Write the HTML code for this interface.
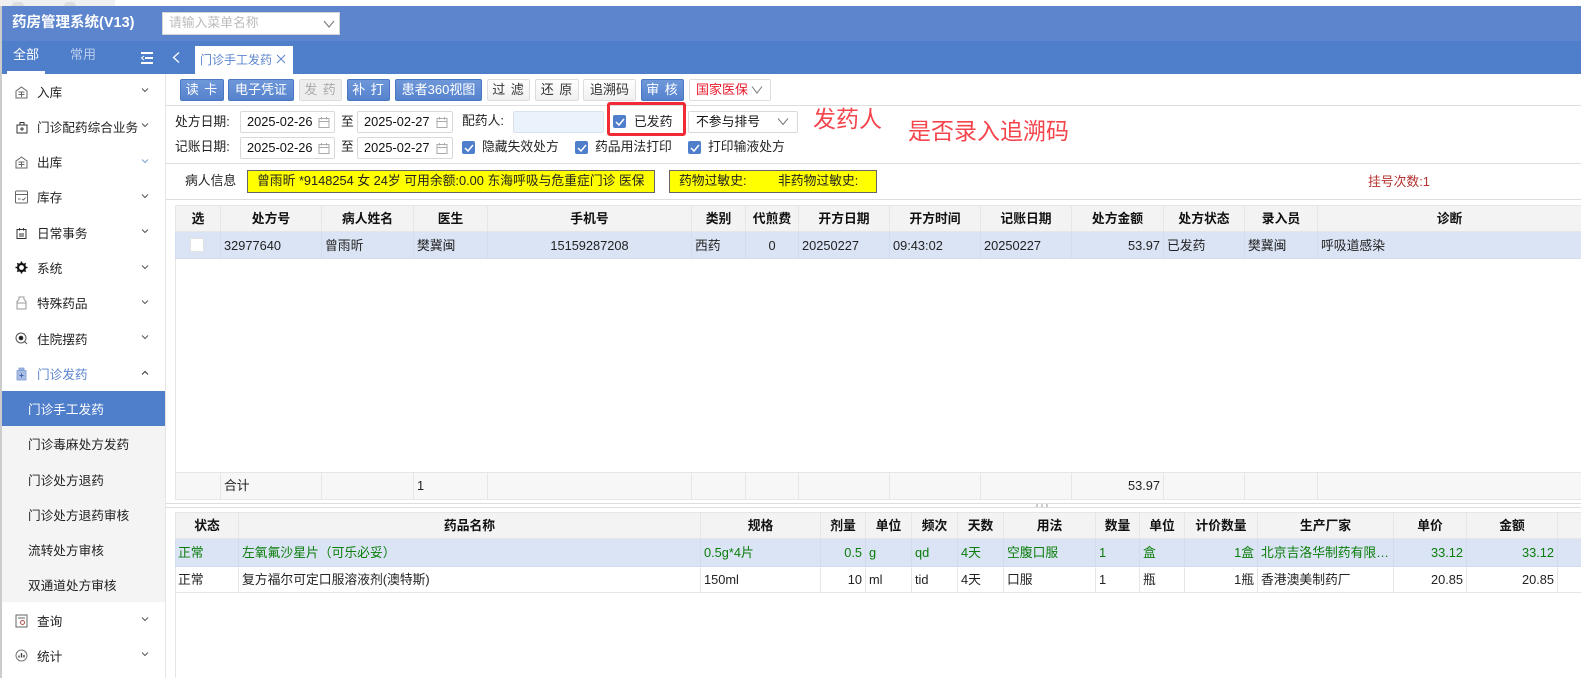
<!DOCTYPE html>
<html lang="zh-CN">
<head>
<meta charset="utf-8">
<title>药房管理系统</title>
<style>
html,body{margin:0;padding:0;width:1581px;height:678px;overflow:hidden;background:#fff}
body{position:relative;font-family:"Liberation Sans","Noto Sans CJK SC",sans-serif;font-size:12.8px;color:#222}
div,span,svg{position:absolute;box-sizing:border-box}
.t{height:20px;line-height:20px;white-space:nowrap}
.m{left:37px;color:#222;font-size:12.65px}
.s{left:28px;color:#222;font-size:12.65px}
.btn{top:79px;height:22px;line-height:20px;text-align:center;font-size:13px;border-radius:2px;white-space:nowrap}
.b{background:linear-gradient(#6f98da,#5582cd);border:1px solid #4a78c4;color:#fff}
.w{background:linear-gradient(#fff,#f0f0f0);border:1px solid #ddd;color:#333}
.g{background:#eee;border:1px solid #ddd;color:#aaa}
.inp{height:22px;border:1px solid #d9d9d9;border-radius:2px;background:#fff;line-height:20px;padding-left:6px;font-size:12.8px;color:#111}
.cb{width:13px;height:13px;background:#4f7ecb;border-radius:2px}
.cb svg{left:1.500px;top:2.500px}
.line{height:1px;background:#ddd}
table{position:absolute;border-collapse:collapse;table-layout:fixed;font-size:12.8px}
td{border:1px solid #e6e6e6;padding:0 3px;white-space:nowrap;overflow:hidden;color:#222;line-height:16px}
.h td{background:#f3f3f3;font-weight:bold;text-align:center;color:#111;padding:0;border-color:#e6e6e6}
.sel td{background:#dbe4f4;border-color:#d3dcee}
.up td{padding-top:1px}
.gr td{color:#0a7d0a}
.sum td{background:#f7f7f7}
.r{text-align:right}.c{text-align:center}
td.f{padding-left:2px}
</style>
</head>
<body>
<div style="left:0;top:0;width:115px;height:6px;background:#f0f0f0"></div>
<div style="left:12px;top:2px;width:12px;height:4px;background:#ddd;border-radius:6px 6px 0 0"></div>
<div style="left:64px;top:2px;width:12px;height:4px;background:#ddd;border-radius:6px 6px 0 0"></div>
<div style="left:0;top:6px;width:2px;height:672px;background:#ccc"></div>

<div style="left:2px;top:6px;width:1579px;height:35px;background:#5c85cd"></div>
<div style="left:2px;top:41px;width:1579px;height:33px;background:#4f7ecb"></div>
<div class="t" style="left:12px;top:13px;color:#fff;font-weight:bold;font-size:14.5px">药房管理系统(V13)</div>
<div style="left:162px;top:12px;width:178px;height:23px;background:#fff;border:1px solid #d5d5d5"></div>
<div class="t" style="left:169px;top:13px;color:#bbb;font-size:12.8px">请输入菜单名称</div>
<svg style="left:322px;top:19px" width="14" height="10" viewBox="0 0 14 10"><path d="M2 2l5 6 5-6" fill="none" stroke="#777" stroke-width="1.1"/></svg>

<div class="t" style="left:13px;top:45px;color:#fff;font-size:13px">全部</div>
<div style="left:7px;top:71px;width:38px;height:3px;background:#fff"></div>
<div class="t" style="left:70px;top:45px;color:#b9cdec;font-size:13px">常用</div>
<svg style="left:140px;top:51px" width="14" height="14" viewBox="0 0 14 14"><path d="M1 2h12M5 7h8M1 12h12" stroke="#fff" stroke-width="2"/><path d="M4 5L1.500 7 4 9" fill="none" stroke="#fff" stroke-width="1"/></svg>
<svg style="left:171px;top:51px" width="10" height="13" viewBox="0 0 10 13"><path d="M8 1.500L2.500 6.500 8 11.500" fill="none" stroke="#fff" stroke-width="1.300"/></svg>
<div style="left:195px;top:46px;width:98px;height:28px;background:#fff"></div>
<div class="t" style="left:200px;top:50px;color:#5c85cd;font-size:12px">门诊手工发药</div>
<svg style="left:276px;top:54px" width="10" height="10" viewBox="0 0 10 10"><path d="M1 1l8 8M9 1l-8 8" stroke="#5c85cd" stroke-width="1"/></svg>

<!-- sidebar -->
<div style="left:165px;top:74px;width:1px;height:604px;background:#e5e5e5"></div>
<div class="t m" style="top:83px">入库</div>
<div class="t m" style="top:118px">门诊配药综合业务</div>
<div class="t m" style="top:153px">出库</div>
<div class="t m" style="top:188px">库存</div>
<div class="t m" style="top:224px">日常事务</div>
<div class="t m" style="top:259px">系统</div>
<div class="t m" style="top:294px">特殊药品</div>
<div class="t m" style="top:330px">住院摆药</div>
<div class="t m" style="top:365px;color:#5c85cd">门诊发药</div>
<div style="left:2px;top:391px;width:163px;height:211px;background:#f4f4f4"></div>
<div style="left:2px;top:391px;width:163px;height:35px;background:#4f7ecb"></div>
<div class="t s" style="top:400px;color:#fff">门诊手工发药</div>
<div class="t s" style="top:435px">门诊毒麻处方发药</div>
<div class="t s" style="top:471px">门诊处方退药</div>
<div class="t s" style="top:506px">门诊处方退药审核</div>
<div class="t s" style="top:541px">流转处方审核</div>
<div class="t s" style="top:576px">双通道处方审核</div>
<div class="t m" style="top:612px">查询</div>
<div class="t m" style="top:647px">统计</div>

<!-- chevrons -->
<svg style="left:141px;top:87px" width="8" height="6" viewBox="0 0 8 6"><path d="M1 1.500l3 3 3-3" fill="none" stroke="#555"/></svg>
<svg style="left:141px;top:122px" width="8" height="6" viewBox="0 0 8 6"><path d="M1 1.500l3 3 3-3" fill="none" stroke="#555"/></svg>
<svg style="left:141px;top:158px" width="8" height="6" viewBox="0 0 8 6"><path d="M1 1.500l3 3 3-3" fill="none" stroke="#7f9fd8"/></svg>
<svg style="left:141px;top:193px" width="8" height="6" viewBox="0 0 8 6"><path d="M1 1.500l3 3 3-3" fill="none" stroke="#555"/></svg>
<svg style="left:141px;top:228px" width="8" height="6" viewBox="0 0 8 6"><path d="M1 1.500l3 3 3-3" fill="none" stroke="#555"/></svg>
<svg style="left:141px;top:264px" width="8" height="6" viewBox="0 0 8 6"><path d="M1 1.500l3 3 3-3" fill="none" stroke="#555"/></svg>
<svg style="left:141px;top:299px" width="8" height="6" viewBox="0 0 8 6"><path d="M1 1.500l3 3 3-3" fill="none" stroke="#555"/></svg>
<svg style="left:141px;top:334px" width="8" height="6" viewBox="0 0 8 6"><path d="M1 1.500l3 3 3-3" fill="none" stroke="#555"/></svg>
<svg style="left:141px;top:370px" width="8" height="6" viewBox="0 0 8 6"><path d="M1 4.500l3-3 3 3" fill="none" stroke="#333"/></svg>
<svg style="left:141px;top:616px" width="8" height="6" viewBox="0 0 8 6"><path d="M1 1.500l3 3 3-3" fill="none" stroke="#555"/></svg>
<svg style="left:141px;top:651px" width="8" height="6" viewBox="0 0 8 6"><path d="M1 1.500l3 3 3-3" fill="none" stroke="#555"/></svg>

<!-- menu icons -->
<svg style="left:15px;top:86px" width="13" height="13" viewBox="0 0 13 13"><path d="M6.500 1L12 5v7H1V5z M3.500 6h6M3.500 8.500h6M6.500 6v5" fill="none" stroke="#666" stroke-width="1"/></svg>
<svg style="left:16px;top:121px" width="12" height="13" viewBox="0 0 12 13"><path d="M1 4h10v8H1zM4 4V1.500h4V4M4 8h4M6 6v4" fill="none" stroke="#333" stroke-width="1"/></svg>
<svg style="left:15px;top:156px" width="13" height="13" viewBox="0 0 13 13"><path d="M6.500 1L12 5v7H1V5z M3.500 6h6M3.500 8.500h6M6.500 6v5" fill="none" stroke="#666" stroke-width="1"/></svg>
<svg style="left:15px;top:190px" width="13" height="14" viewBox="0 0 13 14"><path d="M1.500 1h10a1 1 0 0 1 1 1v10a1 1 0 0 1-1 1h-10a1 1 0 0 1-1-1V2a1 1 0 0 1 1-1zM.5 4.500h12M3 9h2.500M7 9l1.500 1 2-2.500" fill="none" stroke="#666" stroke-width="1"/></svg>
<svg style="left:16px;top:227px" width="11" height="12" viewBox="0 0 11 12"><path d="M1 2.500h9v9H1zM3.500 1v2.500M7.500 1v2.500M3 7h5M3 9h5" fill="none" stroke="#333" stroke-width="1"/></svg>
<svg style="left:15px;top:261px" width="13" height="13" viewBox="0 0 13 13"><circle cx="6.500" cy="6.500" r="3.500" fill="none" stroke="#111" stroke-width="2.200"/><path d="M6.500 .5v2M6.500 10.500v2M.5 6.500h2M10.500 6.500h2M2.300 2.300l1.400 1.400M9.300 9.300l1.400 1.400M2.300 10.700l1.400-1.400M9.300 3.700l1.400-1.400" stroke="#111" stroke-width="1.600"/></svg>
<svg style="left:16px;top:296px" width="11" height="14" viewBox="0 0 11 14"><path d="M3 1h5v2.500l2 2V13H1V5.500l2-2zM1 7h9" fill="none" stroke="#999" stroke-width="1"/></svg>
<svg style="left:15px;top:332px" width="13" height="13" viewBox="0 0 13 13"><circle cx="6" cy="6" r="5" fill="none" stroke="#555" stroke-width="1"/><circle cx="6" cy="6" r="2.300" fill="#222"/><path d="M9.500 9.500l2.500 2.500" stroke="#555"/></svg>
<svg style="left:16px;top:367px" width="11" height="14" viewBox="0 0 11 14"><path d="M3 1h5v2H3zM1 3.500h9V13H1z" fill="#a9bde3" stroke="#7e9bd6" stroke-width=".8"/><path d="M3.500 8.500h4M5.500 6.500v4" stroke="#3d63b0" stroke-width="1"/></svg>
<svg style="left:15px;top:614px" width="13" height="14" viewBox="0 0 13 14"><path d="M1 1h11v12H1zM3 4h7" fill="none" stroke="#666" stroke-width="1"/><circle cx="7.500" cy="8.500" r="2" fill="none" stroke="#b05050"/></svg>
<svg style="left:15px;top:649px" width="13" height="13" viewBox="0 0 13 13"><circle cx="6.500" cy="6.500" r="5.500" fill="none" stroke="#777"/><path d="M4 8.500V6.500M6.500 8.500V4M9 8.500V6" stroke="#444" stroke-width="1.400"/></svg>

<!-- toolbar -->
<div class="btn b" style="left:180px;width:44px;letter-spacing:1px">读 卡</div>
<div class="btn b" style="left:228px;width:66px">电子凭证</div>
<div class="btn g" style="left:299px;width:43px;letter-spacing:1px">发 药</div>
<div class="btn b" style="left:347px;width:43px;letter-spacing:1px">补 打</div>
<div class="btn b" style="left:395px;width:87px">患者360视图</div>
<div class="btn w" style="left:487px;width:43px;letter-spacing:1px">过 滤</div>
<div class="btn w" style="left:535px;width:44px;letter-spacing:1px">还 原</div>
<div class="btn w" style="left:583px;width:53px">追溯码</div>
<div class="btn b" style="left:641px;width:43px;letter-spacing:1px">审 核</div>
<div class="btn" style="left:689px;width:82px;border:1px solid #ddd;background:#fff;color:#e8192c;text-align:left;padding-left:6px">国家医保</div>
<svg style="left:750px;top:85px" width="14" height="10" viewBox="0 0 14 10"><path d="M2 1.500l5 6.500 5-6.500" fill="none" stroke="#777" stroke-width="1"/></svg>

<div class="line" style="left:166px;top:105px;width:1415px"></div>

<!-- filter -->
<div class="t" style="left:175px;top:112px">处方日期:</div>
<div class="t" style="left:175px;top:137px">记账日期:</div>
<div class="inp" style="left:240px;top:111px;width:95px">2025-02-26</div>
<div class="inp" style="left:240px;top:137px;width:95px">2025-02-26</div>
<div class="t" style="left:341px;top:112px;font-size:12.800px">至</div>
<div class="t" style="left:341px;top:137px;font-size:12.800px">至</div>
<div class="inp" style="left:357px;top:111px;width:96px">2025-02-27</div>
<div class="inp" style="left:357px;top:137px;width:96px">2025-02-27</div>
<svg style="left:318px;top:116px" width="12" height="12" viewBox="0 0 12 12"><path d="M1 2.500h10v9H1zM1 5.500h10M3.500 1v2.500M8.500 1v2.500" fill="none" stroke="#aaa"/></svg>
<svg style="left:318px;top:142px" width="12" height="12" viewBox="0 0 12 12"><path d="M1 2.500h10v9H1zM1 5.500h10M3.500 1v2.500M8.500 1v2.500" fill="none" stroke="#aaa"/></svg>
<svg style="left:436px;top:116px" width="12" height="12" viewBox="0 0 12 12"><path d="M1 2.500h10v9H1zM1 5.500h10M3.500 1v2.500M8.500 1v2.500" fill="none" stroke="#aaa"/></svg>
<svg style="left:436px;top:142px" width="12" height="12" viewBox="0 0 12 12"><path d="M1 2.500h10v9H1zM1 5.500h10M3.500 1v2.500M8.500 1v2.500" fill="none" stroke="#aaa"/></svg>

<div class="t" style="left:462px;top:111px">配药人:</div>
<div style="left:513px;top:111px;width:91px;height:22px;background:#eaf2fb;border:1px solid #d9e2ee;border-radius:2px"></div>
<div style="left:607px;top:102px;width:79px;height:34px;border:3.500px solid #f02b35;border-radius:3px"></div>
<div class="cb" style="left:613px;top:115px"><svg width="10" height="8" viewBox="0 0 10 8"><path d="M1 4l3 3 5-6" fill="none" stroke="#fff" stroke-width="1.500"/></svg></div>
<div class="t" style="left:634px;top:112px">已发药</div>
<div class="inp" style="left:688px;top:111px;width:110px;padding-left:7px">不参与排号</div>
<svg style="left:776px;top:117px" width="14" height="10" viewBox="0 0 14 10"><path d="M2 1.500l5 6 5-6" fill="none" stroke="#777" stroke-width="1"/></svg>

<div class="cb" style="left:462px;top:141px"><svg width="10" height="8" viewBox="0 0 10 8"><path d="M1 4l3 3 5-6" fill="none" stroke="#fff" stroke-width="1.500"/></svg></div>
<div class="t" style="left:482px;top:137px">隐藏失效处方</div>
<div class="cb" style="left:575px;top:141px"><svg width="10" height="8" viewBox="0 0 10 8"><path d="M1 4l3 3 5-6" fill="none" stroke="#fff" stroke-width="1.500"/></svg></div>
<div class="t" style="left:595px;top:137px">药品用法打印</div>
<div class="cb" style="left:688px;top:141px"><svg width="10" height="8" viewBox="0 0 10 8"><path d="M1 4l3 3 5-6" fill="none" stroke="#fff" stroke-width="1.500"/></svg></div>
<div class="t" style="left:708px;top:137px">打印输液处方</div>

<div class="t" style="left:813px;top:104px;height:30px;line-height:30px;font-size:23px;color:#f4454d">发药人</div>
<div class="t" style="left:908px;top:116px;height:30px;line-height:30px;font-size:23px;color:#f4454d">是否录入追溯码</div>

<div class="line" style="left:166px;top:163px;width:1415px"></div>

<!-- patient -->
<div class="t" style="left:185px;top:171px">病人信息</div>
<div style="left:247px;top:170px;width:408px;height:23px;background:#ff0;border:1px solid #666"></div>
<div class="t" style="left:257px;top:171px;color:#222">曾雨昕 *9148254 女 24岁 可用余额:0.00 东海呼吸与危重症门诊 医保</div>
<div style="left:669px;top:170px;width:208px;height:23px;background:#ff0;border:1px solid #666"></div>
<div class="t" style="left:679px;top:171px;color:#222">药物过敏史:</div>
<div class="t" style="left:778px;top:171px;color:#222">非药物过敏史:</div>
<div class="t" style="left:1368px;top:172px;color:#b5322e">挂号次数:1</div>

<div class="line" style="left:166px;top:199px;width:1415px"></div>

<!-- top grid -->
<div style="left:175px;top:258px;width:1px;height:214px;background:#e6e6e6"></div>
<table style="left:175px;top:205px;width:1406px">
<colgroup><col style="width:45px"><col style="width:101px"><col style="width:92px"><col style="width:74px"><col style="width:204px"><col style="width:54px"><col style="width:53px"><col style="width:91px"><col style="width:91px"><col style="width:91px"><col style="width:92px"><col style="width:81px"><col style="width:73px"><col style="width:264px"></colgroup>
<tr class="h" style="height:26px"><td>选</td><td>处方号</td><td>病人姓名</td><td>医生</td><td>手机号</td><td>类别</td><td>代煎费</td><td>开方日期</td><td>开方时间</td><td>记账日期</td><td>处方金额</td><td>处方状态</td><td>录入员</td><td>诊断</td></tr>
<tr class="sel up" style="height:27px"><td></td><td>32977640</td><td>曾雨昕</td><td>樊冀闽</td><td class="c">15159287208</td><td>西药</td><td class="c">0</td><td>20250227</td><td>09:43:02</td><td>20250227</td><td class="r">53.97</td><td>已发药</td><td>樊冀闽</td><td>呼吸道感染</td></tr>
</table>
<div style="left:190px;top:238px;width:14px;height:14px;background:#fff;border:1px solid #e2e2e2"></div>
<table style="left:175px;top:472px;width:1406px">
<colgroup><col style="width:45px"><col style="width:101px"><col style="width:92px"><col style="width:74px"><col style="width:204px"><col style="width:54px"><col style="width:53px"><col style="width:91px"><col style="width:91px"><col style="width:91px"><col style="width:92px"><col style="width:81px"><col style="width:73px"><col style="width:264px"></colgroup>
<tr class="sum" style="height:27px"><td></td><td>合计</td><td></td><td>1</td><td></td><td></td><td></td><td></td><td></td><td></td><td class="r">53.97</td><td></td><td></td><td></td></tr>
</table>

<!-- splitter -->
<div class="line" style="left:166px;top:503px;width:1415px"></div>
<div class="line" style="left:166px;top:507px;width:1415px"></div>
<div style="left:1036px;top:504px;width:2px;height:3px;background:#ccc"></div>
<div style="left:1041px;top:504px;width:2px;height:3px;background:#ccc"></div>
<div style="left:1046px;top:504px;width:2px;height:3px;background:#ccc"></div>

<!-- lower grid -->
<div style="left:175px;top:592px;width:1px;height:86px;background:#e6e6e6"></div>
<table style="left:175px;top:512px;width:1406px">
<colgroup><col style="width:63px"><col style="width:462px"><col style="width:120px"><col style="width:45px"><col style="width:46px"><col style="width:46px"><col style="width:46px"><col style="width:92px"><col style="width:44px"><col style="width:45px"><col style="width:73px"><col style="width:136px"><col style="width:73px"><col style="width:91px"><col style="width:24px"></colgroup>
<tr class="h" style="height:26px"><td>状态</td><td>药品名称</td><td>规格</td><td>剂量</td><td>单位</td><td>频次</td><td>天数</td><td>用法</td><td>数量</td><td>单位</td><td>计价数量</td><td>生产厂家</td><td>单价</td><td>金额</td><td></td></tr>
<tr class="sel gr" style="height:28px"><td class="f">正常</td><td>左氧氟沙星片（可乐必妥）</td><td>0.5g*4片</td><td class="r">0.5</td><td>g</td><td>qd</td><td>4天</td><td>空腹口服</td><td>1</td><td>盒</td><td class="r">1盒</td><td>北京吉洛华制药有限…</td><td class="r">33.12</td><td class="r">33.12</td><td></td></tr>
<tr style="height:26px"><td class="f">正常</td><td>复方福尔可定口服溶液剂(澳特斯)</td><td>150ml</td><td class="r">10</td><td>ml</td><td>tid</td><td>4天</td><td>口服</td><td>1</td><td>瓶</td><td class="r">1瓶</td><td>香港澳美制药厂</td><td class="r">20.85</td><td class="r">20.85</td><td></td></tr>
</table>
</body>
</html>
